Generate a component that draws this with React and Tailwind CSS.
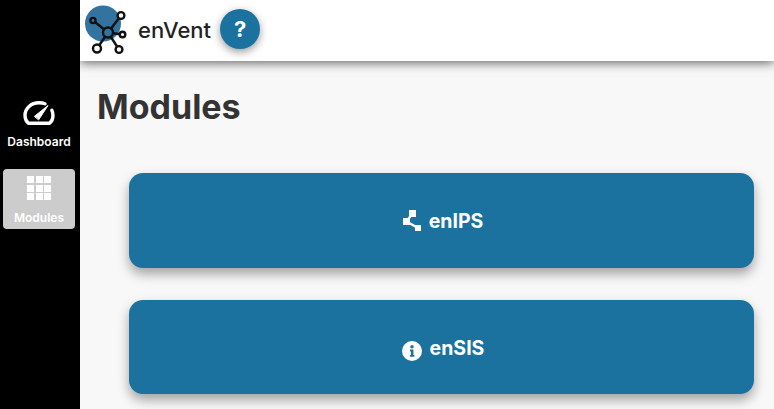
import React from 'react';

function NetworkLogo() {
  // blue disc with the node graph drawn over it
  return (
    <svg width="46" height="56" viewBox="0 0 46 56" className="shrink-0">
      <circle cx="19" cy="20.5" r="18" fill="#33739f" />
      <g stroke="#111" strokeWidth="2.4" fill="none">
        <line x1="24" y1="29.5" x2="9" y2="17.5" />
        <line x1="24" y1="29.5" x2="37" y2="12.5" />
        <line x1="24" y1="29.5" x2="38" y2="31.5" />
        <line x1="24" y1="29.5" x2="13" y2="45.5" />
        <line x1="24" y1="29.5" x2="35" y2="46.5" />
        <circle cx="24" cy="29.5" r="5" strokeWidth="2.4" fill="#33739f" />
        <circle cx="9" cy="17.5" r="2.6" fill="#33739f" />
        <circle cx="37" cy="12.5" r="3.4" fill="#fff" />
        <circle cx="38.5" cy="31.5" r="2.8" fill="#fff" />
        <circle cx="13" cy="45.5" r="4" fill="#fff" />
        <circle cx="35" cy="46.5" r="3.4" fill="#fff" />
      </g>
    </svg>
  );
}

function GaugeIcon() {
  return (
    <svg width="32" height="24" viewBox="0 0 32 24" fill="none" stroke="#fff" strokeLinecap="round">
      <path d="M22 2.8 C20.2 2 18.2 1.8 16 1.8 C8 1.8 2 7.4 2 14.5 C2 17.5 3.2 20.4 5.4 22.2 L26.6 22.2 C28.8 20.4 30 17.5 30 14.5 C30 12.6 29.6 10.8 28.8 9.2" strokeWidth="3.4" strokeLinejoin="round" />
      <path d="M11.6 15.2 L25 4.5 L15.8 18.6 Z" fill="#fff" stroke="#fff" strokeWidth="1" strokeLinejoin="round" />
    </svg>
  );
}

function GridIcon() {
  const cells = [0, 1, 2, 3, 4, 5, 6, 7, 8];
  return (
    <div className="grid grid-cols-3 gap-[1.5px]">
      {cells.map((c) => (
        <div key={c} className="w-[7px] h-[7px] bg-white" />
      ))}
    </div>
  );
}

function TreeIcon() {
  return (
    <svg width="18" height="21" viewBox="0 0 18 21" fill="#fff">
      <rect x="0" y="8" width="7" height="7" />
      <rect x="6" y="0" width="7" height="7" />
      <rect x="12" y="15" width="6" height="6" />
      <path d="M3.5 11.5 L9.5 3.5" stroke="#fff" strokeWidth="2.4" />
      <path d="M3.5 11.5 L15 18" stroke="#fff" strokeWidth="2.4" />
    </svg>
  );
}

function InfoIcon() {
  return (
    <svg width="20" height="20" viewBox="0 0 21 21" className="mt-[8px]">
      <circle cx="10.5" cy="10.5" r="10.5" fill="#fff" />
      <circle cx="10.5" cy="6" r="1.8" fill="#1b729f" />
      <path d="M8.4 9 H12 V14.6 H13 V16.5 H8.4 V14.6 H9.4 V10.9 H8.4 Z" fill="#1b729f" />
    </svg>
  );
}

function ModuleCard({ icon, label, height }) {
  return (
    <button className={`flex items-center justify-center gap-[8px] w-full ${height} pl-[3px] rounded-[14px] bg-[#1b729f] text-white text-[19.5px] font-bold shadow-[0_6px_12px_rgba(0,0,0,0.35)]`}>
      {icon}
      <span className="pt-[3px]">{label}</span>
    </button>
  );
}

export default function App() {
  return (
    <div className="flex h-[409px] w-[774px] overflow-hidden bg-[#f8f8f8] text-[#333] font-['Inter','Liberation_Sans',sans-serif]">
      {/* Sidebar */}
      <aside className="w-[80px] shrink-0 bg-black flex flex-col items-center pt-[101px] pr-[2px] text-white">
        <a className="flex flex-col items-center gap-[9px]">
          <GaugeIcon />
          <span className="text-[12px] font-semibold leading-[16px]">Dashboard</span>
        </a>
        <a className="mt-[19px] flex flex-col items-center w-[72px] h-[60px] pt-[7px] rounded-[4px] bg-[#cccccc] gap-[10px]">
          <GridIcon />
          <span className="text-[12px] font-semibold leading-[16px]">Modules</span>
        </a>
      </aside>

      <div className="flex-1 flex flex-col min-w-0">
        {/* Header */}
        <header className="relative z-10 h-[61px] bg-white flex items-center pl-[4px] shadow-[0_2px_10px_rgba(0,0,0,0.6)]">
          <NetworkLogo />
          <span className="ml-[8px] mb-[1px] text-[22px] leading-none text-[#222] font-medium">enVent</span>
          <button className="ml-[9px] mb-[3px] w-[40px] h-[40px] rounded-full bg-[#1b729f] text-white text-[22px] font-bold flex items-center justify-center shadow-[0_3px_8px_rgba(0,0,0,0.4)]">
            ?
          </button>
        </header>

        {/* Content */}
        <main className="flex-1 pl-[17px] pr-[20px] pt-[24px]">
          <h1 className="text-[34px] leading-[44px] font-bold text-[#333]">Modules</h1>
          <div className="mt-[44px] pl-[32px] flex flex-col gap-[32px]">
            <ModuleCard icon={<TreeIcon />} label="enIPS" height="h-[95px]" />
            <ModuleCard icon={<InfoIcon />} label="enSIS" height="h-[94px]" />
          </div>
        </main>
      </div>
    </div>
  );
}
